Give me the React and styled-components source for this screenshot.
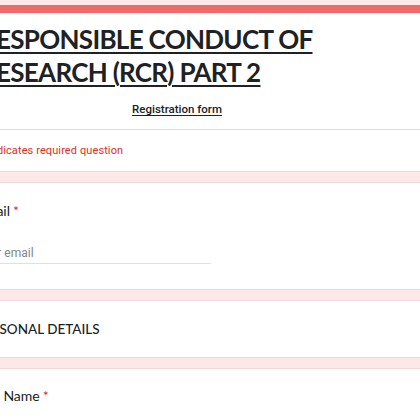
import styled, { createGlobalStyle } from "styled-components";

const GlobalStyle = createGlobalStyle`
  html, body {
    margin: 0;
    padding: 0;
    background: #fde8e8;
    overflow: hidden;
  }
  body {
    font-family: Roboto, "Liberation Sans", sans-serif;
    color: #202124;
  }
`;

const Page = styled.div`
  width: 520px;
  margin-left: -48px;
  padding-top: 5px;
  display: flex;
  flex-direction: column;
  gap: 10px;
`;

const Card = styled.section`
  background: #fff;
  border-top: ${(p) => (p.$accent ? "8px solid #ef6b6b" : "1px solid #f3d9d9")};
  border-bottom: 1px solid #f0d6d6;
  padding: ${(p) => p.$pad || "0 24px"};
  box-sizing: border-box;
`;

const HeaderTop = styled.div`
  padding: 10px 24px 13px 28px;
`;

const Title = styled.h1`
  margin: 0;
  font-family: Lato, "Noto Sans", sans-serif;
  font-weight: 700;
  font-size: 26px;
  line-height: 33px;
  letter-spacing: -0.7px;
  color: #202124;
  text-decoration: underline;
  text-decoration-thickness: 2px;
  text-underline-offset: 3px;
`;

const Description = styled.p`
  margin: 13px 0 0;
  width: 394px;
  text-align: center;
  font-size: 11.5px;
  font-weight: 500;
  color: #202124;
  text-decoration: underline;
  text-underline-offset: 2px;
`;

const Required = styled.div`
  border-top: 1px solid #dadce0;
  padding: 13px 24px 12px 28px;
  font-size: 11px;
  line-height: 16px;
  color: #d93025;
  letter-spacing: 0.1px;
`;

const Label = styled.div`
  font-family: Lato, "Noto Sans", sans-serif;
  font-size: 14px;
  line-height: 18px;
  color: #202124;
`;

const Star = styled.span`
  color: #d93025;
  margin-left: 3px;
`;

const Input = styled.div`
  width: 234px;
  margin-top: 26px;
  padding-bottom: 2px;
  line-height: 15px;
  border-bottom: 1px solid #e0e0e0;
  font-size: 12px;
  color: #80868b;
`;

const SectionTitle = styled.div`
  font-family: Lato, "Noto Sans", sans-serif;
  font-size: 13.5px;
  line-height: 17px;
  font-weight: 500;
  color: #202124;
`;

export default function App() {
  return (
    <>
      <GlobalStyle />
      <Page>
        <Card $accent $pad="0">
          <HeaderTop>
            <Title>
              RESPONSIBLE CONDUCT OF
              <br />
              RESEARCH (RCR) PART 2
            </Title>
            <Description>Registration form</Description>
          </HeaderTop>
          <Required>* Indicates required question</Required>
        </Card>
        <Card $pad="19px 24px 25px 25px">
          <Label>
            Email<Star>*</Star>
          </Label>
          <Input>Your email</Input>
        </Card>
        <Card $pad="20px 24px 19px 23px">
          <SectionTitle>PERSONAL DETAILS</SectionTitle>
        </Card>
        <Card $pad="18px 24px 30px 26px">
          <Label>
            Full Name<Star>*</Star>
          </Label>
        </Card>
      </Page>
    </>
  );
}
